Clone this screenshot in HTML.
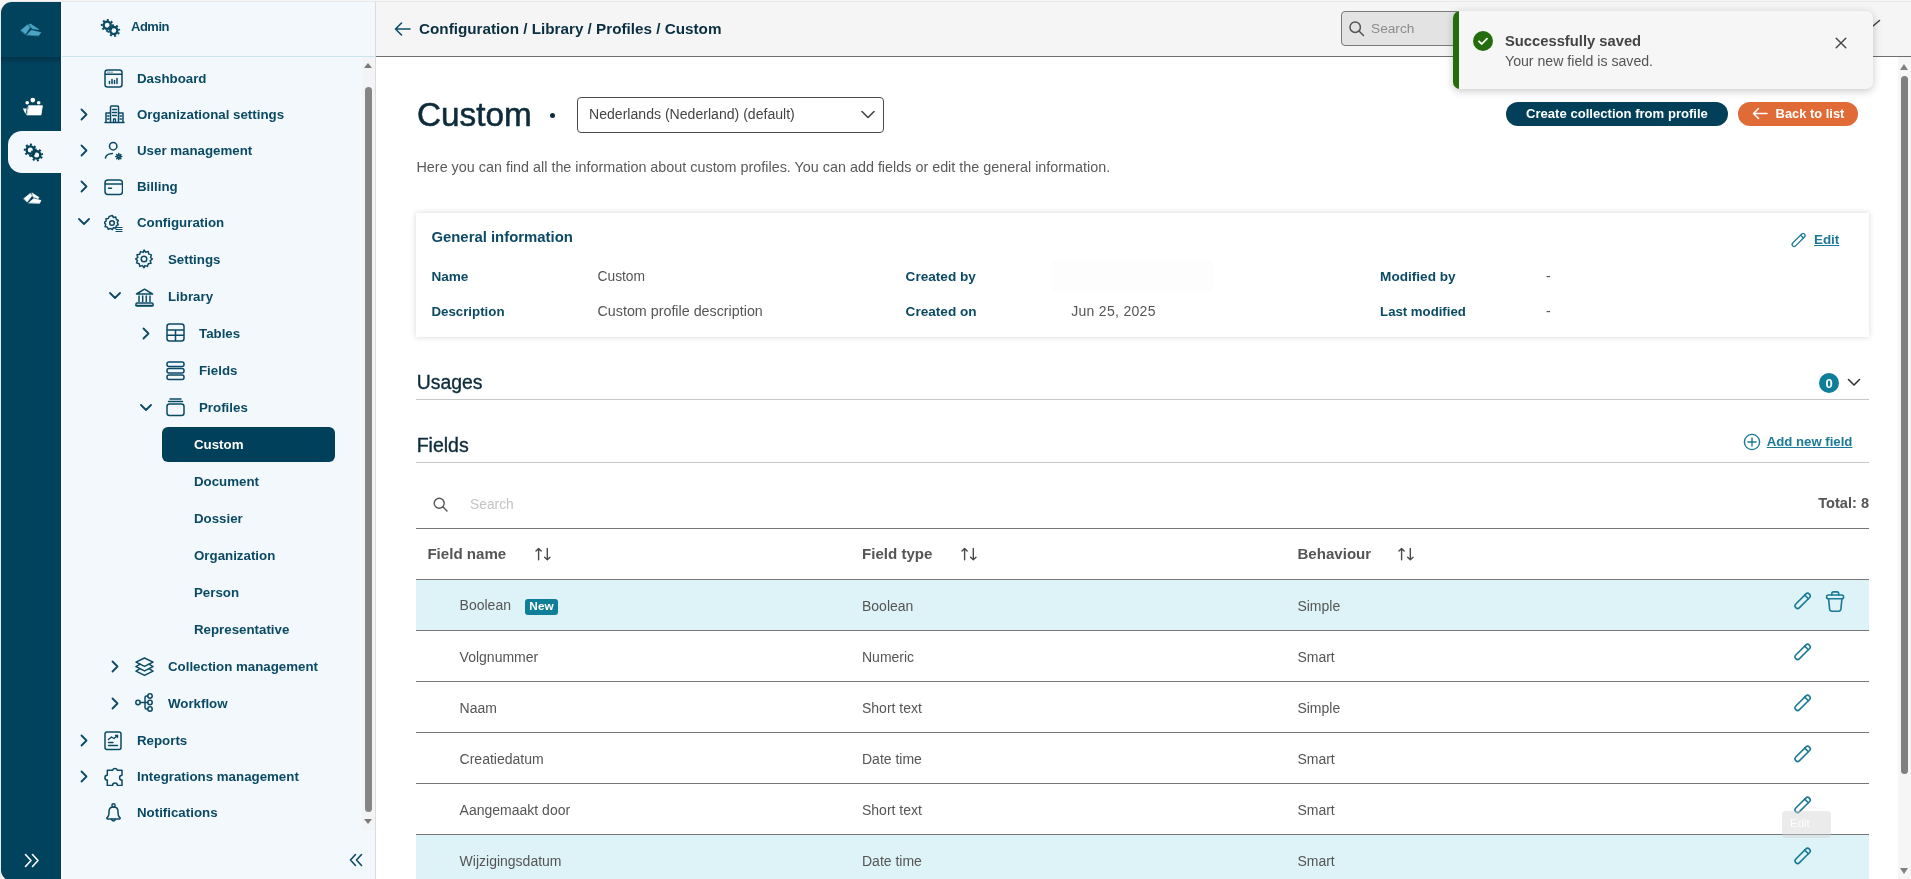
<!DOCTYPE html>
<html><head><meta charset="utf-8">
<style>
*{box-sizing:border-box;margin:0;padding:0}
html,body{width:1911px;height:879px;overflow:hidden;background:#f5f5f5;font-family:"Liberation Sans",sans-serif}
#app{position:absolute;left:0;top:0;width:1911px;height:879px;background:#fff;clip-path:inset(2px -20px -2px 1px round 11px);will-change:transform}
.a{position:absolute}
.t{position:absolute;white-space:nowrap}
.nav{position:absolute;font-weight:bold;font-size:13.3px;color:#0b4a64;white-space:nowrap;line-height:15px}
</style></head><body>
<div style="position:absolute;left:0;top:1px;width:1924px;height:900px;border:1px solid #e9e9e9;border-radius:12px"></div>
<div id="app">
<div class="a" style="left:0;top:0;width:61px;height:879px;background:#01425c"></div>
<div class="a" style="left:0;top:57px;width:61px;height:7px;background:linear-gradient(#01344a,#01425c)"></div><div class="a" style="left:60px;top:0;width:1px;height:879px;background:#013a52"></div>
<div class="a" style="left:61px;top:0;width:1px;height:879px;background:#fff"></div>
<svg class="a" style="left:20px;top:23px" width="22" height="14" viewBox="0 0 22 14" fill="#4ba5c4" stroke="#4ba5c4" stroke-width="0.6" stroke-linecap="round" stroke-linejoin="round"><path d="M0.9 7.3 L7.5 1.8 L9.9 4.5 L5.5 11 Z"/><path d="M8.8 1.6 L10.5 0.9 L18.9 6.5 L12.5 5.8 Z"/><path d="M6.9 11.7 L11.3 7.3 L20.9 9.5 L18.7 12.5 Z"/></svg>
<svg class="a" style="left:22px;top:97px" width="22" height="19" viewBox="0 0 22 19" fill="#fff" stroke="none" stroke-width="0" stroke-linecap="round" stroke-linejoin="round"><circle cx="10.8" cy="3.1" r="2.4"/><circle cx="5.2" cy="5.8" r="1.8"/><circle cx="16.7" cy="5.8" r="1.8"/><path d="M6.8 8.7 H20.4 L19 17.9 H5.1 Z" stroke="#fff" stroke-width="0.8" stroke-linejoin="round"/><path d="M0.8 11.6 L4.8 11.6 L3.5 17 Z"/></svg>
<div class="a" style="left:8px;top:131px;width:54px;height:42px;background:#f2f8fc;border-radius:14px 0 0 14px"></div>
<svg class="a" style="left:22px;top:142px" width="23" height="21" viewBox="0 0 23 21"><circle cx="8.3" cy="8.1" r="3.7" stroke="#02405a" stroke-width="2.4" fill="none"/><circle cx="8.3" cy="8.1" r="5.5" stroke="#02405a" stroke-width="2.0" fill="none" stroke-dasharray="1.944 2.376" stroke-dashoffset="0.972" /><circle cx="14.6" cy="12.9" r="3.7" stroke="#02405a" stroke-width="2.4" fill="none"/><circle cx="14.6" cy="12.9" r="5.5" stroke="#02405a" stroke-width="2.0" fill="none" stroke-dasharray="1.944 2.376" stroke-dashoffset="2.472" /></svg>
<svg class="a" style="left:23px;top:192px" width="19" height="13" viewBox="0 0 19 13" fill="#fff" stroke="#fff" stroke-width="0.7" stroke-linecap="round" stroke-linejoin="round"><path d="M0.9 6.6 L7.3 1.4 L8.9 3.8 L4.3 9.8 Z"/><path d="M9.2 1.1 L16 5.5 L15.2 6.6 L10.3 4.9 Z"/><path d="M5.9 10.7 L10.8 6.6 L18 8.5 L16.6 11.1 Z"/></svg>
<svg class="a" style="left:24px;top:853px" width="16" height="15" viewBox="0 0 16 15" fill="none" stroke="#fff" stroke-width="1.6" stroke-linecap="round" stroke-linejoin="round"><path d="M1.5 1.5 L7 7.5 L1.5 13.5 M8.5 1.5 L14 7.5 L8.5 13.5"/></svg>
<div class="a" style="left:62px;top:0;width:313px;height:879px;background:#f2f8fc"></div>
<div class="a" style="left:62px;top:56px;width:313px;height:1px;background:#c9e6ef"></div>
<div class="a" style="left:375px;top:0;width:1px;height:879px;background:#dcdcdc"></div>
<svg class="a" style="left:100px;top:18px" width="22" height="21" viewBox="0 0 22 21"><circle cx="7.2" cy="7.3" r="3.6" stroke="#0b4a64" stroke-width="2.3" fill="none"/><circle cx="7.2" cy="7.3" r="5.4" stroke="#0b4a64" stroke-width="2.0" fill="none" stroke-dasharray="1.909 2.333" stroke-dashoffset="0.954" /><circle cx="13.8" cy="12.6" r="3.6" stroke="#0b4a64" stroke-width="2.3" fill="none"/><circle cx="13.8" cy="12.6" r="5.4" stroke="#0b4a64" stroke-width="2.0" fill="none" stroke-dasharray="1.909 2.333" stroke-dashoffset="2.454" /></svg>
<div class="t" style="left:131px;top:19px;font-weight:bold;font-size:13px;letter-spacing:-0.5px;line-height:15px;color:#0b4a64">Admin</div>
<svg class="a" style="left:104px;top:69px" width="19" height="20" viewBox="0 0 19 20" fill="none" stroke="#0b4a64" stroke-width="1.5" stroke-linecap="round" stroke-linejoin="round"><rect x="1" y="1" width="17" height="17" rx="2.5"/><path d="M1.5 5.2 H17.5"/><path d="M4 3.1h.01M6 3.1h.01M8 3.1h.01" stroke-width="1.3"/><path d="M5.5 14.5v-2M8 14.5v-4M10.5 14.5v-3M13 14.5v-5" stroke-width="1.5"/></svg>
<div class="nav" style="left:137px;top:71px">Dashboard</div>
<svg class="a" style="left:80px;top:108px" width="8" height="13" viewBox="0 0 8 13" fill="none" stroke="#0b4a64" stroke-width="1.8" stroke-linecap="round" stroke-linejoin="round"><path d="M1.5 1.5 L6.5 6.5 L1.5 11.5"/></svg>
<svg class="a" style="left:104px;top:105px" width="21" height="20" viewBox="0 0 21 20" fill="none" stroke="#0b4a64" stroke-width="1.5" stroke-linecap="round" stroke-linejoin="round"><path d="M1 17.5 H20"/><path d="M6.5 17 V2 Q6.5 1 7.5 1 H13.5 Q14.5 1 14.5 2 V17"/><path d="M2 17 V8 H6.5 M14.5 8 H19 V17"/><path d="M8.5 4.5h4M8.5 7.5h4M8.5 10.5h4M9.5 17v-3h2v3M3.5 11h1.5M3.5 14h1.5M16 11h1.5M16 14h1.5" stroke-width="1.3"/></svg>
<div class="nav" style="left:137px;top:107px">Organizational settings</div>
<svg class="a" style="left:80px;top:144px" width="8" height="13" viewBox="0 0 8 13" fill="none" stroke="#0b4a64" stroke-width="1.8" stroke-linecap="round" stroke-linejoin="round"><path d="M1.5 1.5 L6.5 6.5 L1.5 11.5"/></svg>
<svg class="a" style="left:104px;top:141px" width="19" height="20" viewBox="0 0 19 20" fill="none" stroke="#0b4a64" stroke-width="1.5" stroke-linecap="round" stroke-linejoin="round"><circle cx="9.2" cy="5.2" r="3.7"/><path d="M1.4 17 Q2.2 12.6 8.4 12.4"/><circle cx="14.8" cy="15.6" r="1.3" stroke-width="1.7"/><path d="M14.8 12.6v1M14.8 17.6v1M11.8 15.6h1M16.8 15.6h1M12.7 13.5l.7.7M16.2 17l.7.7M12.7 17.7l.7-.7M16.2 14.2l.7-.7" stroke-width="1.5"/></svg>
<div class="nav" style="left:137px;top:143px">User management</div>
<svg class="a" style="left:80px;top:180px" width="8" height="13" viewBox="0 0 8 13" fill="none" stroke="#0b4a64" stroke-width="1.8" stroke-linecap="round" stroke-linejoin="round"><path d="M1.5 1.5 L6.5 6.5 L1.5 11.5"/></svg>
<svg class="a" style="left:104px;top:179px" width="19" height="20" viewBox="0 0 19 20" fill="none" stroke="#0b4a64" stroke-width="1.5" stroke-linecap="round" stroke-linejoin="round"><rect x="1" y="1" width="17.5" height="14.5" rx="3"/><path d="M1.5 5 H18"/><path d="M4.5 9.3h3" /></svg>
<div class="nav" style="left:137px;top:179px">Billing</div>
<svg class="a" style="left:78px;top:218px" width="12" height="8" viewBox="0 0 12 8" fill="none" stroke="#0b4a64" stroke-width="1.8" stroke-linecap="round" stroke-linejoin="round"><path d="M1 1 L6 6 L11 1"/></svg>
<svg class="a" style="left:104px;top:214px" width="19" height="20" viewBox="0 0 19 20" fill="none" stroke="#0b4a64" stroke-width="1.5" stroke-linecap="round" stroke-linejoin="round"><path d="M8.3 1.5l1.2 2 2.3-.4.5 2.3 2 1.1-1 2.1 1 2.1-2 1.1-.5 2.3-2.3-.4-1.2 2-1.9-1.3-2.1 1-.9-2.2-2.3-.6.5-2.3-1.4-1.9 1.9-1.3-.1-2.4 2.3-.2 1-2.1z"/><circle cx="8" cy="9" r="2.3"/><path d="M12 13.5h6M12 15.5h6M12 17.5h6" stroke-width="1.2"/></svg>
<div class="nav" style="left:137px;top:215px">Configuration</div>
<svg class="a" style="left:135px;top:249px" width="19" height="20" viewBox="0 0 19 20" fill="none" stroke="#0b4a64" stroke-width="1.5" stroke-linecap="round" stroke-linejoin="round"><path d="M9 1l1.6 2.2 2.6-.8.6 2.7 2.6.8-.8 2.6L17.4 10l-2.2 1.6.8 2.6-2.7.6-.8 2.6-2.6-.8L9 18.8l-1.6-2.2-2.6.8-.6-2.7-2.6-.8.8-2.6L.6 10l2.2-1.6-.8-2.6 2.7-.6.8-2.6 2.6.8z"/><circle cx="9" cy="10" r="2.8"/></svg>
<div class="nav" style="left:168px;top:252px">Settings</div>
<svg class="a" style="left:109px;top:292px" width="12" height="8" viewBox="0 0 12 8" fill="none" stroke="#0b4a64" stroke-width="1.8" stroke-linecap="round" stroke-linejoin="round"><path d="M1 1 L6 6 L11 1"/></svg>
<svg class="a" style="left:135px;top:288px" width="19" height="20" viewBox="0 0 19 20" fill="none" stroke="#0b4a64" stroke-width="1.5" stroke-linecap="round" stroke-linejoin="round"><path d="M1.5 6 L9.5 1.2 L17.5 6 Z"/><path d="M1 17.5h17"/><rect x="1" y="15" width="17" height="3" rx="1"/><path d="M4 8v5.5M7.7 8v5.5M11.3 8v5.5M15 8v5.5"/></svg>
<div class="nav" style="left:168px;top:289px">Library</div>
<svg class="a" style="left:142px;top:327px" width="8" height="13" viewBox="0 0 8 13" fill="none" stroke="#0b4a64" stroke-width="1.8" stroke-linecap="round" stroke-linejoin="round"><path d="M1.5 1.5 L6.5 6.5 L1.5 11.5"/></svg>
<svg class="a" style="left:166px;top:323px" width="19" height="20" viewBox="0 0 19 20" fill="none" stroke="#0b4a64" stroke-width="1.5" stroke-linecap="round" stroke-linejoin="round"><rect x="1" y="1" width="17" height="17" rx="2.5"/><path d="M1.5 7h16M9.5 7v10.5M1.5 12.2h16"/></svg>
<div class="nav" style="left:199px;top:326px">Tables</div>
<svg class="a" style="left:166px;top:361px" width="19" height="20" viewBox="0 0 19 20" fill="none" stroke="#0b4a64" stroke-width="1.5" stroke-linecap="round" stroke-linejoin="round"><rect x="1" y="1" width="17" height="4.5" rx="2"/><rect x="1" y="7.5" width="17" height="4.5" rx="2"/><rect x="1" y="14" width="17" height="4.5" rx="2"/></svg>
<div class="nav" style="left:199px;top:363px">Fields</div>
<svg class="a" style="left:140px;top:404px" width="12" height="8" viewBox="0 0 12 8" fill="none" stroke="#0b4a64" stroke-width="1.8" stroke-linecap="round" stroke-linejoin="round"><path d="M1 1 L6 6 L11 1"/></svg>
<svg class="a" style="left:166px;top:397px" width="19" height="20" viewBox="0 0 19 20" fill="none" stroke="#0b4a64" stroke-width="1.5" stroke-linecap="round" stroke-linejoin="round"><rect x="1" y="7" width="17" height="11.5" rx="2.5"/><path d="M2.5 4.5h14M4 2h11"/></svg>
<div class="nav" style="left:199px;top:400px">Profiles</div>
<div class="a" style="left:162px;top:427px;width:173px;height:35px;border-radius:6px;background:#01405b"></div>
<div class="nav" style="left:194px;top:437px;color:#fff">Custom</div>
<div class="nav" style="left:194px;top:474px;color:#0b4a64">Document</div>
<div class="nav" style="left:194px;top:511px;color:#0b4a64">Dossier</div>
<div class="nav" style="left:194px;top:548px;color:#0b4a64">Organization</div>
<div class="nav" style="left:194px;top:585px;color:#0b4a64">Person</div>
<div class="nav" style="left:194px;top:622px;color:#0b4a64">Representative</div>
<svg class="a" style="left:111px;top:660px" width="8" height="13" viewBox="0 0 8 13" fill="none" stroke="#0b4a64" stroke-width="1.8" stroke-linecap="round" stroke-linejoin="round"><path d="M1.5 1.5 L6.5 6.5 L1.5 11.5"/></svg>
<svg class="a" style="left:135px;top:657px" width="19" height="20" viewBox="0 0 19 20" fill="none" stroke="#0b4a64" stroke-width="1.5" stroke-linecap="round" stroke-linejoin="round"><path d="M9.5 1 L18 5.2 L9.5 9.4 L1 5.2 Z"/><path d="M5 7.2 L1 9.7 L9.5 13.9 L18 9.7 L14 7.2"/><path d="M5 11.7 L1 14.2 L9.5 18.4 L18 14.2 L14 11.7"/></svg>
<div class="nav" style="left:168px;top:659px">Collection management</div>
<svg class="a" style="left:111px;top:697px" width="8" height="13" viewBox="0 0 8 13" fill="none" stroke="#0b4a64" stroke-width="1.8" stroke-linecap="round" stroke-linejoin="round"><path d="M1.5 1.5 L6.5 6.5 L1.5 11.5"/></svg>
<svg class="a" style="left:135px;top:693px" width="19" height="20" viewBox="0 0 19 20" fill="none" stroke="#0b4a64" stroke-width="1.5" stroke-linecap="round" stroke-linejoin="round"><circle cx="3" cy="9.5" r="2.2"/><circle cx="15" cy="3" r="2.2"/><circle cx="15" cy="9.5" r="2.2"/><circle cx="15" cy="16" r="2.2"/><path d="M5.2 9.5h7.6M10 9.5V4.5Q10 3 11.5 3h1.3M10 9.5v5Q10 16 11.5 16h1.3"/></svg>
<div class="nav" style="left:168px;top:696px">Workflow</div>
<svg class="a" style="left:80px;top:734px" width="8" height="13" viewBox="0 0 8 13" fill="none" stroke="#0b4a64" stroke-width="1.8" stroke-linecap="round" stroke-linejoin="round"><path d="M1.5 1.5 L6.5 6.5 L1.5 11.5"/></svg>
<svg class="a" style="left:104px;top:731px" width="19" height="20" viewBox="0 0 19 20" fill="none" stroke="#0b4a64" stroke-width="1.5" stroke-linecap="round" stroke-linejoin="round"><rect x="1" y="1" width="16" height="17.5" rx="2"/><path d="M4.5 14.5h9M4.5 11.5h4.5M4.5 8.5 L7.5 6 L10 7.5 L13.5 4.5M11.5 4.5h2v2" stroke-width="1.4"/></svg>
<div class="nav" style="left:137px;top:733px">Reports</div>
<svg class="a" style="left:80px;top:770px" width="8" height="13" viewBox="0 0 8 13" fill="none" stroke="#0b4a64" stroke-width="1.8" stroke-linecap="round" stroke-linejoin="round"><path d="M1.5 1.5 L6.5 6.5 L1.5 11.5"/></svg>
<svg class="a" style="left:104px;top:766px" width="19" height="20" viewBox="0 0 19 20" fill="none" stroke="#0b4a64" stroke-width="1.5" stroke-linecap="round" stroke-linejoin="round"><path d="M3.3 4.2 H8.6 A2.5 2.5 0 0 1 13.4 4.2 H18 V9.3 A2.4 2.4 0 0 0 18 14.1 V19.4 H13.4 A2.4 2.4 0 0 0 8.6 19.4 H3.3 V14.1 A2.4 2.4 0 0 1 3.3 9.3 Z"/></svg>
<div class="nav" style="left:137px;top:769px">Integrations management</div>
<svg class="a" style="left:104px;top:802px" width="19" height="20" viewBox="0 0 19 20" fill="none" stroke="#0b4a64" stroke-width="1.5" stroke-linecap="round" stroke-linejoin="round"><circle cx="9.5" cy="3.4" r="1.6"/><path d="M3.6 15.2 Q5 13.5 5 11 V9.5 Q5 5 9.5 5 Q14 5 14 9.5 V11 Q14 13.5 15.4 15.2 Q17 16.5 15.5 17 H3.5 Q2 16.5 3.6 15.2 Z"/><path d="M7.8 17.2 A1.7 1.7 0 0 0 11.2 17.2"/></svg>
<div class="nav" style="left:137px;top:805px">Notifications</div>
<div class="a" style="left:362px;top:57px;width:13px;height:774px;background:#f3f4f5"></div>
<div class="a" style="left:364px;top:63px;width:0;height:0;border-left:4.5px solid transparent;border-right:4.5px solid transparent;border-bottom:5px solid #7a7a7a"></div>
<div class="a" style="left:365px;top:87px;width:7px;height:725px;border-radius:3.5px;background:#858585"></div>
<div class="a" style="left:364px;top:819px;width:0;height:0;border-left:4.5px solid transparent;border-right:4.5px solid transparent;border-top:5px solid #7a7a7a"></div>
<svg class="a" style="left:349px;top:853px" width="14" height="14" viewBox="0 0 14 14" fill="none" stroke="#0b4a64" stroke-width="1.6" stroke-linecap="round" stroke-linejoin="round"><path d="M6.5 1.5 L1.5 7 L6.5 12.5 M12.5 1.5 L7.5 7 L12.5 12.5"/></svg>
<div class="a" style="left:376px;top:0;width:1535px;height:56px;background:#f5f5f5"></div>
<div class="a" style="left:376px;top:56px;width:1535px;height:1px;background:#6e6e6e"></div>
<svg class="a" style="left:394px;top:22px" width="17" height="14" viewBox="0 0 17 14" fill="none" stroke="#0e4f6a" stroke-width="1.6" stroke-linecap="round" stroke-linejoin="round"><path d="M16 7H1.5M7.5 1L1.5 7L7.5 13"/></svg>
<div class="t" style="left:419px;top:20px;font-size:15.25px;line-height:17px;color:#0a2f40;font-weight:bold;">Configuration / Library / Profiles / Custom</div>
<div class="a" style="left:1341px;top:11px;width:160px;height:35px;border:1px solid #7a7a7a;border-radius:4px;background:#e3e3e3"></div>
<svg class="a" style="left:1349px;top:21px" width="16" height="16" viewBox="0 0 16 16" fill="none" stroke="#555" stroke-width="1.5" stroke-linecap="round" stroke-linejoin="round"><circle cx="6.2" cy="6.2" r="5.2"/><path d="M10 10L14.5 14.5"/></svg>
<div class="t" style="left:1371px;top:21px;font-size:13.7px;line-height:15px;color:#8c8c8c;font-weight:normal;">Search</div>
<svg class="a" style="left:1871px;top:19px" width="10" height="9" viewBox="0 0 10 9" fill="none" stroke="#444" stroke-width="1.6" stroke-linecap="round" stroke-linejoin="round"><path d="M2 7L8.5 1.5"/></svg>
<div class="a" style="left:1453px;top:11px;width:420px;height:78px;border-radius:7px;background:#f6f6f6;box-shadow:0 2px 8px rgba(0,0,0,0.22);overflow:hidden"><div style="position:absolute;left:0;top:0;width:6px;height:78px;background:#236b0b"></div></div>
<div class="a" style="left:1473px;top:31px;width:20px;height:20px;border-radius:50%;background:#256c0c"></div>
<svg class="a" style="left:1473px;top:31px" width="20" height="20" viewBox="0 0 20 20" fill="none" stroke="#fff" stroke-width="1.8" stroke-linecap="round" stroke-linejoin="round"><path d="M6 10.3L8.8 13L14 7.6"/></svg>
<div class="t" style="left:1505px;top:33px;font-size:14.75px;line-height:16px;color:#444;font-weight:bold;">Successfully saved</div>
<div class="t" style="left:1505px;top:53px;font-size:14.15px;line-height:16px;color:#555;font-weight:normal;">Your new field is saved.</div>
<svg class="a" style="left:1835px;top:37px" width="12" height="12" viewBox="0 0 12 12" fill="none" stroke="#444" stroke-width="1.4" stroke-linecap="round" stroke-linejoin="round"><path d="M1.2 1.2L10.8 10.8M10.8 1.2L1.2 10.8"/></svg>
<div class="t" style="left:417px;top:96px;font-size:33.3px;line-height:37px;color:#0d2b3a;font-weight:normal;-webkit-text-stroke:0.55px #0d2b3a">Custom</div>
<div class="a" style="left:549.7px;top:112.5px;width:5.6px;height:5.6px;border-radius:50%;background:#0d2b3a"></div>
<div class="a" style="left:577px;top:97px;width:307px;height:36px;border:1px solid #4a4a4a;border-radius:4px;background:#fff"></div>
<div class="t" style="left:589px;top:106px;font-size:14.09px;line-height:16px;color:#444;font-weight:normal;">Nederlands (Nederland) (default)</div>
<svg class="a" style="left:861px;top:110px" width="14" height="10" viewBox="0 0 14 10" fill="none" stroke="#444" stroke-width="1.6" stroke-linecap="round" stroke-linejoin="round"><path d="M1 1.5L7 7.5L13 1.5"/></svg>
<div class="a" style="left:1506px;top:102px;width:222px;height:24px;border-radius:12px;background:#02405a"></div>
<div class="t" style="left:1526px;top:106px;font-size:13.1px;line-height:15px;color:#fff;font-weight:bold;">Create collection from profile</div>
<div class="a" style="left:1738px;top:102px;width:120px;height:24px;border-radius:12px;background:#e06b36"></div>
<svg class="a" style="left:1752px;top:107px" width="16" height="13" viewBox="0 0 16 13" fill="none" stroke="#fff" stroke-width="1.5" stroke-linecap="round" stroke-linejoin="round"><path d="M15 6.5H1.5M6.5 1.5L1.5 6.5L6.5 11.5"/></svg>
<div class="t" style="left:1775.6px;top:106px;font-size:12.9px;line-height:15px;color:#fff;font-weight:bold;">Back to list</div>
<div class="t" style="left:416.5px;top:159px;font-size:14.36px;line-height:16px;color:#5a5a5a;font-weight:normal;">Here you can find all the information about custom profiles. You can add fields or edit the general information.</div>
<div class="a" style="left:416px;top:213px;width:1453px;height:124px;background:#fff;box-shadow:0 0 6px rgba(0,0,0,0.16)"></div>
<div class="t" style="left:431.4px;top:229px;font-size:14.9px;line-height:16px;color:#0b4a64;font-weight:bold;">General information</div>
<svg class="a" style="left:1791px;top:233px" width="15" height="15" viewBox="0 0 15 15" fill="none" stroke="#1a7a96" stroke-width="1.3" stroke-linecap="round" stroke-linejoin="round"><g transform="translate(7.6 7) rotate(-45)"><rect x="-8.3" y="-2" width="16.6" height="4" rx="2"/><path d="M4.8 -2 V2"/></g></svg>
<div class="t" style="left:1814px;top:232px;font-size:13.4px;line-height:15px;color:#1a7a96;font-weight:bold;"><u style="text-underline-offset:1px">Edit</u></div>
<div class="t" style="left:431.4px;top:269px;font-size:13.6px;line-height:15px;color:#0b4a64;font-weight:bold;">Name</div>
<div class="t" style="left:431.4px;top:304px;font-size:13.3px;line-height:15px;color:#0b4a64;font-weight:bold;">Description</div>
<div class="t" style="left:905.6px;top:269px;font-size:13.6px;line-height:15px;color:#0b4a64;font-weight:bold;">Created by</div>
<div class="t" style="left:905.6px;top:304px;font-size:13.6px;line-height:15px;color:#0b4a64;font-weight:bold;">Created on</div>
<div class="t" style="left:1380.1px;top:269px;font-size:13.6px;line-height:15px;color:#0b4a64;font-weight:bold;">Modified by</div>
<div class="t" style="left:1380.1px;top:304px;font-size:13.2px;line-height:15px;color:#0b4a64;font-weight:bold;">Last modified</div>
<div class="t" style="left:597.5px;top:269px;font-size:13.8px;line-height:15px;color:#555;font-weight:normal;">Custom</div>
<div class="t" style="left:597.5px;top:303px;font-size:14.3px;line-height:16px;color:#555;font-weight:normal;">Custom profile description</div>
<div class="a" style="left:1052px;top:261px;width:161px;height:30px;background:#fdfdfd"></div>
<div class="t" style="left:1071.2px;top:303px;font-size:14px;line-height:16px;color:#555;font-weight:normal;letter-spacing:0.3px">Jun 25, 2025</div>
<div class="t" style="left:1546px;top:269px;font-size:13.8px;line-height:15px;color:#555;font-weight:normal;">-</div>
<div class="t" style="left:1546px;top:304px;font-size:13.8px;line-height:15px;color:#555;font-weight:normal;">-</div>
<div class="t" style="left:416.7px;top:371px;font-size:19.4px;line-height:22px;color:#0d2b3a;font-weight:normal;-webkit-text-stroke:0.35px #0d2b3a">Usages</div>
<div class="a" style="left:1819px;top:373px;width:20px;height:20px;border-radius:50%;background:#0f7e98"></div>
<div class="t" style="left:1819px;top:376px;font-size:13px;line-height:15px;color:#fff;font-weight:bold;width:20px;text-align:center">0</div>
<svg class="a" style="left:1847px;top:378px" width="14" height="9" viewBox="0 0 14 9" fill="none" stroke="#333" stroke-width="1.6" stroke-linecap="round" stroke-linejoin="round"><path d="M1.5 1.5L7 7L12.5 1.5"/></svg>
<div class="a" style="left:416px;top:399px;width:1453px;height:1px;background:#c8c8c8"></div>
<div class="t" style="left:416.7px;top:434px;font-size:19.5px;line-height:22px;color:#0d2b3a;font-weight:normal;-webkit-text-stroke:0.35px #0d2b3a">Fields</div>
<svg class="a" style="left:1743px;top:433px" width="18" height="18" viewBox="0 0 18 18" fill="none" stroke="#1a7a96" stroke-width="1.4" stroke-linecap="round" stroke-linejoin="round"><circle cx="9" cy="9" r="7.6"/><path d="M9 5v8M5 9h8"/></svg>
<div class="t" style="left:1766.7px;top:434px;font-size:13.2px;line-height:15px;color:#1a7a96;font-weight:bold;"><u style="text-underline-offset:1px">Add new field</u></div>
<div class="a" style="left:416px;top:462px;width:1453px;height:1px;background:#c8c8c8"></div>
<svg class="a" style="left:433px;top:497px" width="16" height="16" viewBox="0 0 16 16" fill="none" stroke="#555" stroke-width="1.4" stroke-linecap="round" stroke-linejoin="round"><circle cx="6.2" cy="6.2" r="5"/><path d="M9.8 9.8L14 14"/></svg>
<div class="t" style="left:470px;top:497px;font-size:13.8px;line-height:15px;color:#c4c4c4;font-weight:normal;">Search</div>
<div class="t" style="right:42px;top:495px;font-size:14.6px;line-height:16px;color:#555;font-weight:bold;">Total: 8</div>
<div class="a" style="left:416px;top:528px;width:1453px;height:1px;background:#777"></div>
<div class="t" style="left:427.4px;top:545px;font-size:15.1px;line-height:17px;color:#555;font-weight:bold;">Field name</div>
<svg class="a" style="left:535px;top:547px" width="16" height="15" viewBox="0 0 16 15" fill="none" stroke="#4a4a4a" stroke-width="1.4" stroke-linecap="round" stroke-linejoin="round"><path d="M3.6 12.8V1.6M1 3.9L3.6 1.4L6.2 3.9M12.3 1.4V12.6M9.6 10.3L12.3 12.8L15 10.3"/></svg>
<div class="t" style="left:862px;top:545px;font-size:15.1px;line-height:17px;color:#555;font-weight:bold;">Field type</div>
<svg class="a" style="left:961px;top:547px" width="16" height="15" viewBox="0 0 16 15" fill="none" stroke="#4a4a4a" stroke-width="1.4" stroke-linecap="round" stroke-linejoin="round"><path d="M3.6 12.8V1.6M1 3.9L3.6 1.4L6.2 3.9M12.3 1.4V12.6M9.6 10.3L12.3 12.8L15 10.3"/></svg>
<div class="t" style="left:1297.4px;top:545px;font-size:15.1px;line-height:17px;color:#555;font-weight:bold;">Behaviour</div>
<svg class="a" style="left:1398px;top:547px" width="16" height="15" viewBox="0 0 16 15" fill="none" stroke="#4a4a4a" stroke-width="1.4" stroke-linecap="round" stroke-linejoin="round"><path d="M3.6 12.8V1.6M1 3.9L3.6 1.4L6.2 3.9M12.3 1.4V12.6M9.6 10.3L12.3 12.8L15 10.3"/></svg>
<div class="a" style="left:416px;top:579px;width:1453px;height:1px;background:#777"></div>
<div class="a" style="left:416px;top:580px;width:1453px;height:50px;background:#def3f7"></div>
<div class="a" style="left:416px;top:630px;width:1453px;height:1px;background:#777"></div>
<div class="t" style="left:459.6px;top:597px;font-size:14px;line-height:16px;color:#555;font-weight:normal;">Boolean</div>
<div class="t" style="left:862px;top:598px;font-size:14px;line-height:16px;color:#555;font-weight:normal;">Boolean</div>
<div class="t" style="left:1297.4px;top:598px;font-size:14px;line-height:16px;color:#555;font-weight:normal;">Simple</div>
<svg class="a" style="left:1794px;top:592px" width="18" height="18" viewBox="0 0 18 18" fill="none" stroke="#1a7a96" stroke-width="1.6" stroke-linecap="round" stroke-linejoin="round"><g transform="translate(8.6 8.9) rotate(-45)"><rect x="-9.6" y="-2.6" width="19.2" height="5.2" rx="2.6"/><path d="M5.6 -2.6 V2.6"/></g></svg>
<div class="a" style="left:525px;top:599px;width:33px;height:16px;border-radius:3px;background:#0f7e98"></div>
<div class="t" style="left:525px;top:599px;font-size:11.8px;line-height:14px;color:#fff;font-weight:bold;width:33px;text-align:center">New</div>
<svg class="a" style="left:1825px;top:591px" width="20" height="22" viewBox="0 0 20 22" fill="none" stroke="#1a7a96" stroke-width="1.6" stroke-linecap="round" stroke-linejoin="round"><rect x="1.6" y="4" width="17" height="3.8" rx="1.9"/><path d="M6.8 4 V2.6 Q6.8 0.9 8.5 0.9 H12 Q13.7 0.9 13.7 2.6 V4"/><path d="M3.6 7.8 L4.6 18.2 Q4.9 20.3 7 20.3 H13.5 Q15.6 20.3 15.9 18.2 L16.9 7.8"/></svg>
<div class="a" style="left:416px;top:681px;width:1453px;height:1px;background:#777"></div>
<div class="t" style="left:459.6px;top:649px;font-size:14px;line-height:16px;color:#555;font-weight:normal;">Volgnummer</div>
<div class="t" style="left:862px;top:649px;font-size:14px;line-height:16px;color:#555;font-weight:normal;">Numeric</div>
<div class="t" style="left:1297.4px;top:649px;font-size:14px;line-height:16px;color:#555;font-weight:normal;">Smart</div>
<svg class="a" style="left:1794px;top:643px" width="18" height="18" viewBox="0 0 18 18" fill="none" stroke="#1a7a96" stroke-width="1.6" stroke-linecap="round" stroke-linejoin="round"><g transform="translate(8.6 8.9) rotate(-45)"><rect x="-9.6" y="-2.6" width="19.2" height="5.2" rx="2.6"/><path d="M5.6 -2.6 V2.6"/></g></svg>
<div class="a" style="left:416px;top:732px;width:1453px;height:1px;background:#777"></div>
<div class="t" style="left:459.6px;top:700px;font-size:14px;line-height:16px;color:#555;font-weight:normal;">Naam</div>
<div class="t" style="left:862px;top:700px;font-size:14px;line-height:16px;color:#555;font-weight:normal;">Short text</div>
<div class="t" style="left:1297.4px;top:700px;font-size:14px;line-height:16px;color:#555;font-weight:normal;">Simple</div>
<svg class="a" style="left:1794px;top:694px" width="18" height="18" viewBox="0 0 18 18" fill="none" stroke="#1a7a96" stroke-width="1.6" stroke-linecap="round" stroke-linejoin="round"><g transform="translate(8.6 8.9) rotate(-45)"><rect x="-9.6" y="-2.6" width="19.2" height="5.2" rx="2.6"/><path d="M5.6 -2.6 V2.6"/></g></svg>
<div class="a" style="left:416px;top:783px;width:1453px;height:1px;background:#777"></div>
<div class="t" style="left:459.6px;top:751px;font-size:14px;line-height:16px;color:#555;font-weight:normal;">Creatiedatum</div>
<div class="t" style="left:862px;top:751px;font-size:14px;line-height:16px;color:#555;font-weight:normal;">Date time</div>
<div class="t" style="left:1297.4px;top:751px;font-size:14px;line-height:16px;color:#555;font-weight:normal;">Smart</div>
<svg class="a" style="left:1794px;top:745px" width="18" height="18" viewBox="0 0 18 18" fill="none" stroke="#1a7a96" stroke-width="1.6" stroke-linecap="round" stroke-linejoin="round"><g transform="translate(8.6 8.9) rotate(-45)"><rect x="-9.6" y="-2.6" width="19.2" height="5.2" rx="2.6"/><path d="M5.6 -2.6 V2.6"/></g></svg>
<div class="a" style="left:416px;top:834px;width:1453px;height:1px;background:#777"></div>
<div class="t" style="left:459.6px;top:802px;font-size:14px;line-height:16px;color:#555;font-weight:normal;">Aangemaakt door</div>
<div class="t" style="left:862px;top:802px;font-size:14px;line-height:16px;color:#555;font-weight:normal;">Short text</div>
<div class="t" style="left:1297.4px;top:802px;font-size:14px;line-height:16px;color:#555;font-weight:normal;">Smart</div>
<svg class="a" style="left:1794px;top:796px" width="18" height="18" viewBox="0 0 18 18" fill="none" stroke="#1a7a96" stroke-width="1.6" stroke-linecap="round" stroke-linejoin="round"><g transform="translate(8.6 8.9) rotate(-45)"><rect x="-9.6" y="-2.6" width="19.2" height="5.2" rx="2.6"/><path d="M5.6 -2.6 V2.6"/></g></svg>
<div class="a" style="left:416px;top:835px;width:1453px;height:50px;background:#def3f7"></div>
<div class="a" style="left:416px;top:885px;width:1453px;height:1px;background:#777"></div>
<div class="t" style="left:459.6px;top:853px;font-size:14px;line-height:16px;color:#555;font-weight:normal;">Wijzigingsdatum</div>
<div class="t" style="left:862px;top:853px;font-size:14px;line-height:16px;color:#555;font-weight:normal;">Date time</div>
<div class="t" style="left:1297.4px;top:853px;font-size:14px;line-height:16px;color:#555;font-weight:normal;">Smart</div>
<svg class="a" style="left:1794px;top:847px" width="18" height="18" viewBox="0 0 18 18" fill="none" stroke="#1a7a96" stroke-width="1.6" stroke-linecap="round" stroke-linejoin="round"><g transform="translate(8.6 8.9) rotate(-45)"><rect x="-9.6" y="-2.6" width="19.2" height="5.2" rx="2.6"/><path d="M5.6 -2.6 V2.6"/></g></svg>
<div class="a" style="left:1782px;top:811px;width:49px;height:27px;border-radius:4px;background:rgba(210,210,210,0.45)"></div>
<div class="t" style="left:1790px;top:817px;font-size:11.5px;line-height:12px;color:rgba(255,255,255,0.85);font-weight:normal;">Edit</div>
<div class="a" style="left:1898px;top:57px;width:13px;height:822px;background:#f6f6f6"></div>
<div class="a" style="left:1900px;top:64px;width:0;height:0;border-left:4.5px solid transparent;border-right:4.5px solid transparent;border-bottom:6px solid #808080"></div>
<div class="a" style="left:1901px;top:76px;width:7px;height:698px;border-radius:3.5px;background:#808080"></div>
<div class="a" style="left:1900px;top:868px;width:0;height:0;border-left:4.5px solid transparent;border-right:4.5px solid transparent;border-top:6px solid #808080"></div>
</div>
</body></html>
